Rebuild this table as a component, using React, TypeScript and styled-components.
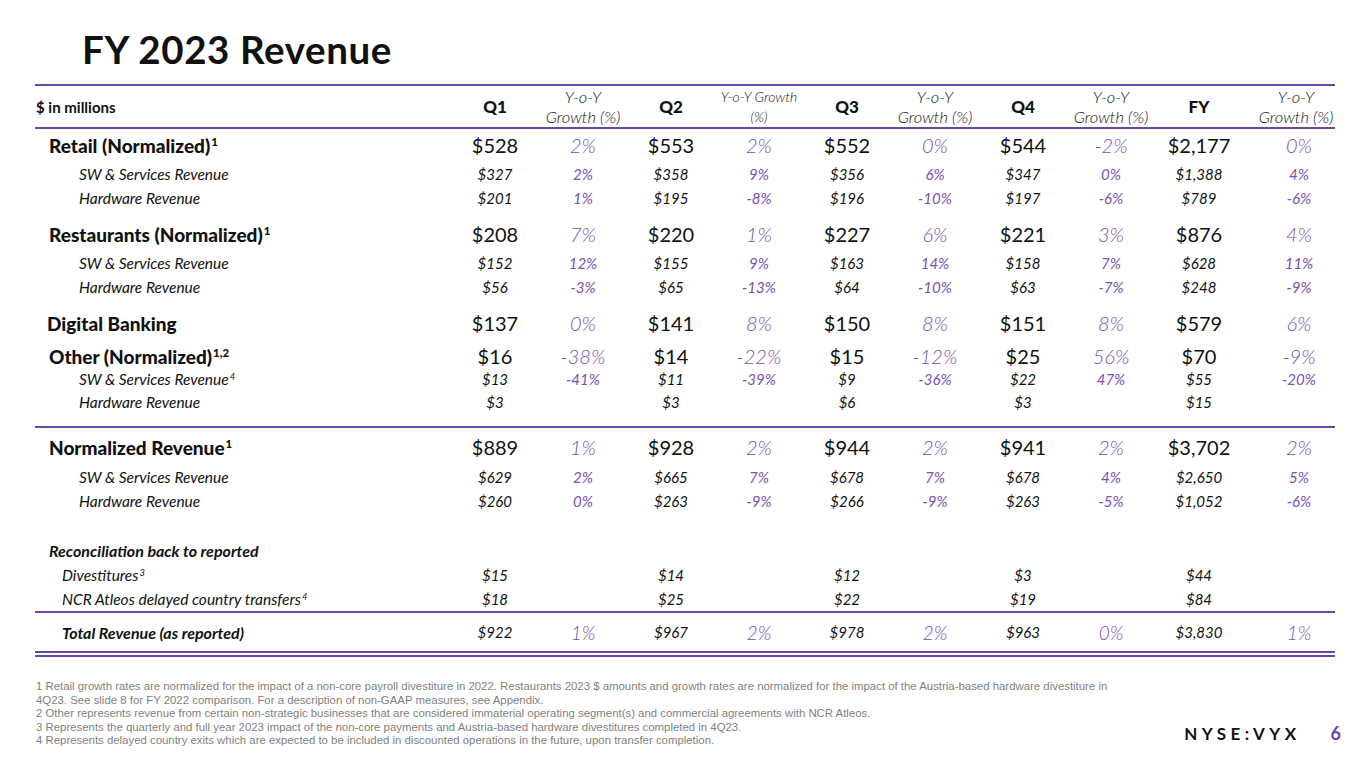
import styled, { createGlobalStyle } from "styled-components";

type Kind = "major" | "sub" | "recon" | "item" | "total";

interface RowData {
	label: string;
	sup?: string;
	kind: Kind;
	indent: number;
	h: number;
	mt: number;
	vals: string[];
}

const PURPLE = "#6b45a8";
const GROWTH = "#7a4fb4";
const COLS = "416px repeat(9, 88px) 92px";

const GlobalStyle = createGlobalStyle`
	html, body {
		margin: 0;
		padding: 0;
		background: #ffffff;
	}
	body {
		font-family: Lato, "Noto Sans", sans-serif;
		color: #111;
	}
`;

const Slide = styled.div`
	width: 1365px;
	height: 768px;
	box-sizing: border-box;
	padding: 30px 24px 0 35px;
	overflow: hidden;
`;

const Title = styled.h1`
	margin: 0 0 16px 47px;
	font-size: 38.5px;
	line-height: 38px;
	font-weight: 700;
	letter-spacing: 0.6px;
	color: #111;
`;

const Table = styled.div`
	width: 1300px;
`;

const Divider = styled.div<{ $mt?: number }>`
	height: 2px;
	margin-top: ${(p) => p.$mt ?? 0}px;
	background: ${PURPLE};
`;

const Row = styled.div<{ $h: number; $mt: number }>`
	display: grid;
	grid-template-columns: ${COLS};
	height: ${(p) => p.$h}px;
	margin-top: ${(p) => p.$mt}px;
	align-items: center;
`;

const HeadLabel = styled.div`
	padding-left: 1px;
	font-size: 15px;
	font-weight: 700;
`;

const HeadPeriod = styled.div`
	text-align: center;
	font-size: 17px;
	font-weight: 900;
`;

const HeadGrowth = styled.div<{ $small?: boolean; $last?: boolean }>`
	text-align: center;
	font-style: italic;
	font-weight: 300;
	font-size: ${(p) => (p.$small ? 14 : 16.5)}px;
	line-height: 20px;
	white-space: nowrap;
	padding-left: ${(p) => (p.$last ? 14 : 0)}px;
`;

const Label = styled.div<{ $kind: Kind; $indent: number }>`
	padding-left: ${(p) => p.$indent}px;
	white-space: nowrap;
	font-size: ${(p) => (p.$kind === "major" ? 19 : p.$kind === "sub" || p.$kind === "item" ? 15.5 : 16)}px;
	font-weight: ${(p) => (p.$kind === "major" ? 900 : p.$kind === "recon" || p.$kind === "total" ? 700 : 400)};
	font-style: ${(p) => (p.$kind === "major" ? "normal" : "italic")};
`;

const Sup = styled.sup`
	font-size: 0.6em;
	line-height: 0;
	vertical-align: 0.55em;
	margin-left: 1px;
`;

const Amount = styled.div<{ $kind: Kind }>`
	text-align: center;
	font-size: ${(p) => (p.$kind === "major" ? 20 : 15)}px;
	font-style: ${(p) => (p.$kind === "major" ? "normal" : "italic")};
	font-weight: 400;
	color: #111;
`;

const Growth = styled.div<{ $kind: Kind; $last?: boolean }>`
	text-align: center;
	color: ${GROWTH};
	font-style: italic;
	font-weight: ${(p) => (p.$kind === "major" || p.$kind === "total" ? 300 : 400)};
	font-size: ${(p) => (p.$kind === "major" ? 20 : p.$kind === "total" ? 19 : 15)}px;
	padding-left: ${(p) => (p.$last ? 20 : 0)}px;
`;

const Footer = styled.div`
	display: flex;
	justify-content: space-between;
	align-items: flex-end;
	margin-top: 23px;
	padding-left: 1px;
`;

const Notes = styled.div`
	font-family: "Liberation Sans", Arial, sans-serif;
	font-size: 11.4px;
	line-height: 13.6px;
	color: #7f7f7f;
	white-space: nowrap;
`;

const Brand = styled.div`
	display: flex;
	align-items: baseline;
	gap: 30px;
	margin-bottom: 4px;
`;

const Ticker = styled.span`
	font-size: 17px;
	font-weight: 700;
	letter-spacing: 4.4px;
	color: #111;
`;

const PageNum = styled.span`
	font-size: 18px;
	font-weight: 700;
	color: ${PURPLE};
`;

const rows: RowData[] = [
	{ label: "Retail (Normalized)", sup: "1", kind: "major", indent: 14, h: 30, mt: 1, vals: ["$528", "2%", "$553", "2%", "$552", "0%", "$544", "-2%", "$2,177", "0%"] },
	{ label: "SW & Services Revenue", kind: "sub", indent: 44, h: 24, mt: 2, vals: ["$327", "2%", "$358", "9%", "$356", "6%", "$347", "0%", "$1,388", "4%"] },
	{ label: "Hardware Revenue", kind: "sub", indent: 44, h: 24, mt: 0, vals: ["$201", "1%", "$195", "-8%", "$196", "-10%", "$197", "-6%", "$789", "-6%"] },
	{ label: "Restaurants (Normalized)", sup: "1", kind: "major", indent: 14, h: 30, mt: 9, vals: ["$208", "7%", "$220", "1%", "$227", "6%", "$221", "3%", "$876", "4%"] },
	{ label: "SW & Services Revenue", kind: "sub", indent: 44, h: 24, mt: 2, vals: ["$152", "12%", "$155", "9%", "$163", "14%", "$158", "7%", "$628", "11%"] },
	{ label: "Hardware Revenue", kind: "sub", indent: 44, h: 24, mt: 0, vals: ["$56", "-3%", "$65", "-13%", "$64", "-10%", "$63", "-7%", "$248", "-9%"] },
	{ label: "Digital Banking", kind: "major", indent: 12, h: 30, mt: 9, vals: ["$137", "0%", "$141", "8%", "$150", "8%", "$151", "8%", "$579", "6%"] },
	{ label: "Other (Normalized)", sup: "1,2", kind: "major", indent: 14, h: 24, mt: 6, vals: ["$16", "-38%", "$14", "-22%", "$15", "-12%", "$25", "56%", "$70", "-9%"] },
	{ label: "SW & Services Revenue", sup: "4", kind: "sub", indent: 44, h: 22, mt: 0, vals: ["$13", "-41%", "$11", "-39%", "$9", "-36%", "$22", "47%", "$55", "-20%"] },
	{ label: "Hardware Revenue", kind: "sub", indent: 44, h: 24, mt: 0, vals: ["$3", "", "$3", "", "$6", "", "$3", "", "$15", ""] },
];

const normalizedRows: RowData[] = [
	{ label: "Normalized Revenue", sup: "1", kind: "major", indent: 14, h: 30, mt: 4, vals: ["$889", "1%", "$928", "2%", "$944", "2%", "$941", "2%", "$3,702", "2%"] },
	{ label: "SW & Services Revenue", kind: "sub", indent: 44, h: 24, mt: 3, vals: ["$629", "2%", "$665", "7%", "$678", "7%", "$678", "4%", "$2,650", "5%"] },
	{ label: "Hardware Revenue", kind: "sub", indent: 44, h: 24, mt: 0, vals: ["$260", "0%", "$263", "-9%", "$266", "-9%", "$263", "-5%", "$1,052", "-6%"] },
	{ label: "Reconciliation back to reported", kind: "recon", indent: 14, h: 24, mt: 25, vals: [] },
	{ label: "Divestitures", sup: "3", kind: "item", indent: 27, h: 24, mt: 1, vals: ["$15", "", "$14", "", "$12", "", "$3", "", "$44", ""] },
	{ label: "NCR Atleos delayed country transfers", sup: "4", kind: "item", indent: 27, h: 24, mt: 0, vals: ["$18", "", "$25", "", "$22", "", "$19", "", "$84", ""] },
];

const totalRow: RowData = {
	label: "Total Revenue (as reported)",
	kind: "total",
	indent: 27,
	h: 30,
	mt: 4,
	vals: ["$922", "1%", "$967", "2%", "$978", "2%", "$963", "0%", "$3,830", "1%"],
};

function DataRow({ row }: { row: RowData }) {
	return (
		<Row $h={row.h} $mt={row.mt}>
			<Label $kind={row.kind} $indent={row.indent}>
				{row.label}
				{row.sup && <Sup>{row.sup}</Sup>}
			</Label>
			{row.vals.map((v, i) =>
				i % 2 === 0 ? (
					<Amount key={i} $kind={row.kind}>
						{v}
					</Amount>
				) : (
					<Growth key={i} $kind={row.kind} $last={i === 9}>
						{v}
					</Growth>
				)
			)}
		</Row>
	);
}

export default function App() {
	const periods = ["Q1", "Q2", "Q3", "Q4", "FY"];

	return (
		<>
			<GlobalStyle />
			<Slide>
				<Title>FY 2023 Revenue</Title>
				<Table>
					<Divider />
					<Row $h={41} $mt={0}>
						<HeadLabel>$ in millions</HeadLabel>
						{periods.map((p, i) => [
							<HeadPeriod key={p}>{p}</HeadPeriod>,
							i === 1 ? (
								<HeadGrowth key={p + "g"} $small>
									Y-o-Y Growth
									<br />
									(%)
								</HeadGrowth>
							) : (
								<HeadGrowth key={p + "g"} $last={i === 4}>
									Y-o-Y
									<br />
									Growth (%)
								</HeadGrowth>
							),
						])}
					</Row>
					<Divider />
					{rows.map((r, i) => (
						<DataRow key={"a" + i} row={r} />
					))}
					<Divider $mt={12} />
					{normalizedRows.map((r, i) => (
						<DataRow key={"b" + i} row={r} />
					))}
					<Divider />
					<DataRow row={totalRow} />
					<Divider $mt={4} />
					<Divider $mt={2} />
				</Table>
				<Footer>
					<Notes>
						1 Retail growth rates are normalized for the impact of a non-core payroll divestiture in 2022. Restaurants 2023 $ amounts and growth rates are normalized for the impact of the Austria-based hardware divestiture in
						<br />
						4Q23. See slide 8 for FY 2022 comparison. For a description of non-GAAP measures, see Appendix.
						<br />
						2 Other represents revenue from certain non-strategic businesses that are considered immaterial operating segment(s) and commercial agreements with NCR Atleos.
						<br />
						3 Represents the quarterly and full year 2023 impact of the non-core payments and Austria-based hardware divestitures completed in 4Q23.
						<br />
						4 Represents delayed country exits which are expected to be included in discounted operations in the future, upon transfer completion.
					</Notes>
					<Brand>
						<Ticker>NYSE:VYX</Ticker>
						<PageNum>6</PageNum>
					</Brand>
				</Footer>
			</Slide>
		</>
	);
}
